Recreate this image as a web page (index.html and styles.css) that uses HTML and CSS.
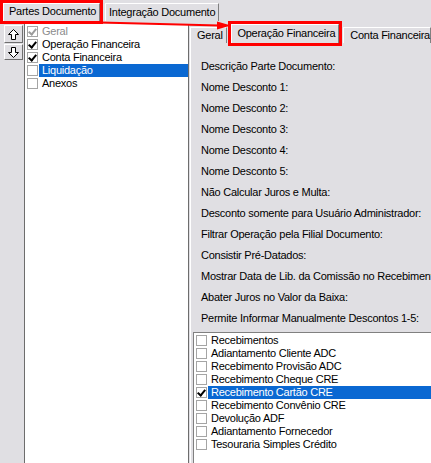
FILE: index.html
```html
<!DOCTYPE html>
<html lang="pt-BR">
<head>
    <meta charset="UTF-8">
    <title>Partes Documento</title>
    <link rel="stylesheet" href="styles.css">
</head>
<body>
    <div class="window">
        <div class="top-tabs">
            <div class="tab tab-active tab-first marked">Partes Documento</div>
            <div class="tab">Integração Documento</div>
        </div>

        <div class="main">
            <div class="side-buttons">
                <button class="arrow-btn up">
                    <svg width="13" height="13" viewBox="0 0 13 13"><path d="M6.5 1.5 L11.5 6.5 L8.5 6.5 L8.5 11.5 L4.5 11.5 L4.5 6.5 L1.5 6.5 Z" fill="#fff" stroke="#000" stroke-width="1"/></svg>
                </button>
                <button class="arrow-btn down">
                    <svg width="13" height="13" viewBox="0 0 13 13"><path d="M6.5 11.5 L11.5 6.5 L8.5 6.5 L8.5 1.5 L4.5 1.5 L4.5 6.5 L1.5 6.5 Z" fill="#fff" stroke="#000" stroke-width="1"/></svg>
                </button>
            </div>

            <ul class="parts-list">
                <li class="disabled"><span class="check checked"></span><span class="label">Geral</span></li>
                <li><span class="check checked"></span><span class="label">Operação Financeira</span></li>
                <li><span class="check checked"></span><span class="label">Conta Financeira</span></li>
                <li class="selected"><span class="check"></span><span class="label">Liquidação</span></li>
                <li><span class="check"></span><span class="label">Anexos</span></li>
            </ul>

            <div class="detail">
                <div class="detail-tabs">
                    <div class="tab tab-geral">Geral</div>
                    <div class="tab tab-active tab-op marked">Operação Financeira</div>
                    <div class="tab tab-conta">Conta Financeira</div>
                </div>
                <div class="detail-body">
                    <div class="fields">
                        <div class="field">Descrição Parte Documento:</div>
                        <div class="field">Nome Desconto 1:</div>
                        <div class="field">Nome Desconto 2:</div>
                        <div class="field">Nome Desconto 3:</div>
                        <div class="field">Nome Desconto 4:</div>
                        <div class="field">Nome Desconto 5:</div>
                        <div class="field">Não Calcular Juros e Multa:</div>
                        <div class="field">Desconto somente para Usuário Administrador:</div>
                        <div class="field">Filtrar Operação pela Filial Documento:</div>
                        <div class="field">Consistir Pré-Datados:</div>
                        <div class="field">Mostrar Data de Lib. da Comissão no Recebimento:</div>
                        <div class="field">Abater Juros no Valor da Baixa:</div>
                        <div class="field">Permite Informar Manualmente Descontos 1-5:</div>
                    </div>
                    <ul class="checklist">
                        <li><span class="check"></span><span class="label">Recebimentos</span></li>
                        <li><span class="check"></span><span class="label">Adiantamento Cliente ADC</span></li>
                        <li><span class="check"></span><span class="label">Recebimento Provisão ADC</span></li>
                        <li><span class="check"></span><span class="label">Recebimento Cheque CRE</span></li>
                        <li class="selected"><span class="check checked"></span><span class="label">Recebimento Cartão CRE</span></li>
                        <li><span class="check"></span><span class="label">Recebimento Convênio CRE</span></li>
                        <li><span class="check"></span><span class="label">Devolução ADF</span></li>
                        <li><span class="check"></span><span class="label">Adiantamento Fornecedor</span></li>
                        <li><span class="check"></span><span class="label">Tesouraria Simples Crédito</span></li>
                    </ul>
                </div>
            </div>
        </div>

        <!-- annotation arrow -->
        <svg class="pointer" width="431" height="463" viewBox="0 0 431 463">
            <line x1="100" y1="22.5" x2="219" y2="25.5" stroke="#f00" stroke-width="2"/>
            <polygon points="217,21.5 231,25.5 217,29.5" fill="#f00"/>
        </svg>
    </div>
</body>
</html>
```

FILE: styles.css
```css
* {
    box-sizing: border-box;
}
body {
    margin: 0;
    padding: 0;
    background-color: #e0dfe3;
    font-family: "Liberation Sans", Arial, sans-serif;
    font-size: 11px;
    letter-spacing: -0.25px;
    color: #000;
}
ul {
    list-style: none;
    margin: 0;
    padding: 0;
}

.window {
    position: relative;
    width: 431px;
    height: 463px;
    overflow: hidden;
}

/* tabs */
.tab {
    background-color: #e0dfe3;
    border-top: 1px solid #fff;
    border-left: 1px solid #fff;
    border-right: 1px solid #808080;
    white-space: nowrap;
    line-height: 15px;
    padding: 0 3px;
}
.tab-active {
    position: relative;
}
.marked {
    outline: 3px solid #f00;
}

.top-tabs {
    display: flex;
    align-items: flex-start;
    height: 24px;
}
.top-tabs .tab {
    margin-top: 3px;
    height: 18px;
    padding-top: 1px;
}
.top-tabs .tab-first {
    margin: 3px 5px 0 3px;
    width: 97px;
    padding: 0 0 0 5px;
    line-height: 15px;
}

.main {
    display: flex;
    height: 439px;
}

.side-buttons {
    width: 24px;
    padding: 1px 0 0 4px;
    display: flex;
    flex-direction: column;
    gap: 1px;
}
.arrow-btn {
    width: 19px;
    height: 18px;
    padding: 0;
    margin: 0;
    background-color: #e0dfe3;
    border-top: 1px solid #fff;
    border-left: 1px solid #fff;
    border-right: 1px solid #6f6f6f;
    border-bottom: 1px solid #6f6f6f;
    display: flex;
    align-items: center;
    justify-content: center;
}
.arrow-btn.down {
    height: 16px;
}

/* checkboxes */
.check {
    position: relative;
    flex: none;
    width: 11px;
    height: 11px;
    background-color: #fff;
    border: 1px solid #a5a5a5;
}
.check.checked::after {
    content: "";
    position: absolute;
    left: 2px;
    top: 0px;
    width: 3px;
    height: 6px;
    border-right: 2px solid #000;
    border-bottom: 2px solid #000;
    transform: rotate(40deg);
}

.parts-list {
    width: 165px;
    background-color: #fff;
    border-left: 1px solid #6d6d6d;
    border-right: 1px solid #6d6d6d;
    padding-top: 1px;
}
.parts-list li,
.checklist li {
    display: flex;
    align-items: center;
    height: 13px;
}
.parts-list .check {
    margin-left: 2px;
}
.label {
    flex: 1;
    padding-left: 3px;
    margin-left: 1px;
    line-height: 13px;
    white-space: nowrap;
}
.selected .label {
    background-color: #0a68d2;
    color: #fff;
}
.disabled {
    color: #8c8c8c;
}
.disabled .check.checked::after {
    border-color: #9c9c9c;
}

/* detail panel */
.detail {
    flex: 1;
    display: flex;
    flex-direction: column;
    padding-left: 1px;
    min-width: 0;
}
.detail-tabs {
    display: flex;
    align-items: flex-end;
    height: 19px;
}
.detail-tabs .tab {
    height: 16px;
    padding: 0 0 0 6px;
}
.tab-geral {
    width: 38px;
}
.detail-tabs .tab-op {
    height: 19px;
    width: 110px;
    margin: 0 4px 0 4px;
    padding-left: 5px;
    line-height: 17px;
}
.tab-conta {
    flex: 1;
    padding-left: 5px;
}

.detail-body {
    flex: 1;
    border-left: 1px solid #fff;
    padding: 13px 0 0 2px;
    overflow: hidden;
}
.fields {
    padding-left: 8px;
}
.field {
    line-height: 21px;
    white-space: nowrap;
}

.checklist {
    margin-top: 3px;
    height: 200px;
    background-color: #fff;
    border-top: 1px solid #808080;
    border-left: 1px solid #808080;
    padding: 1px 0 0 2px;
}

.pointer {
    position: absolute;
    left: 0;
    top: 0;
    pointer-events: none;
}
```
